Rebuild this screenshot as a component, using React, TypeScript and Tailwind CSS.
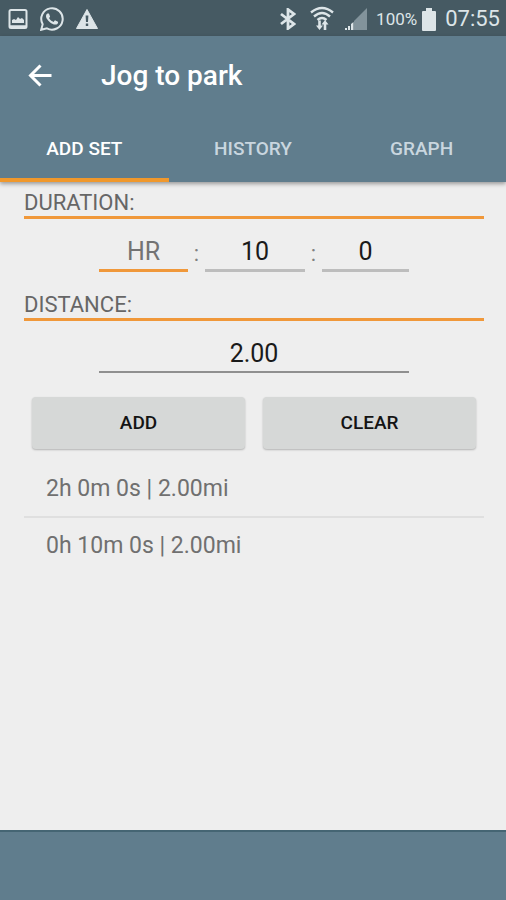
import { useState } from "react";

function StatusBar() {
  return (
    <div className="flex h-9 items-center bg-[#465a63] pt-0.5 pr-1.5 pl-2 text-[#dde5e8]">
      <div className="flex items-center gap-3">
        <svg className="h-5 w-5" viewBox="0 0 20 20" fill="none" role="img" aria-label="Screenshot saved">
          <rect x="1.5" y="1" width="17" height="18" rx="1.5" stroke="currentColor" strokeWidth="2" />
          <path d="M4 14v-3l2-1 2 1 2-3 2 2 2-1 2 2v3z" fill="currentColor" />
          <path d="M2 17.500h16" stroke="currentColor" strokeWidth="2.500" />
        </svg>
        <svg className="h-6 w-6" viewBox="0 0 24 24" fill="currentColor" role="img" aria-label="WhatsApp">
          <path d="M17.472 14.382c-.297-.149-1.758-.867-2.030-.967-.273-.099-.471-.148-.670.150-.197.297-.767.966-.940 1.164-.173.199-.347.223-.644.075-.297-.150-1.255-.463-2.390-1.475-.883-.788-1.480-1.761-1.653-2.059-.173-.297-.018-.458.130-.606.134-.133.298-.347.446-.520.149-.174.198-.298.298-.497.099-.198.050-.371-.025-.520-.075-.149-.669-1.612-.916-2.207-.242-.579-.487-.500-.669-.510-.173-.008-.371-.010-.570-.010-.198 0-.520.074-.792.372-.272.297-1.040 1.016-1.040 2.479 0 1.462 1.065 2.875 1.213 3.074.149.198 2.096 3.200 5.077 4.487.709.306 1.262.489 1.694.625.712.227 1.360.195 1.871.118.571-.085 1.758-.719 2.006-1.413.248-.694.248-1.289.173-1.413-.074-.124-.272-.198-.570-.347" />
          <path d="M1.200 22.800l1.500-5.600A10.700 10.700 0 1 1 6.900 21.300z" fill="none" stroke="currentColor" strokeWidth="2" />
        </svg>
        <svg className="h-[22px] w-[22px]" viewBox="0 0 22 22" role="img" aria-label="Warning">
          <path d="M11 1.500L21.500 20.500H.500z" fill="currentColor" stroke="currentColor" strokeLinejoin="round" />
          <path d="M9.600 7.500h2.800L12 14h-2zM9.800 15.500h2.400V18H9.800z" fill="#465a63" />
        </svg>
      </div>
      <div className="ml-auto flex items-center">
        <svg className="mr-3.5 h-[22px] w-4" viewBox="0 0 16 22" fill="none" role="img" aria-label="Bluetooth">
          <path d="M1 6l13 10-6 4.500V1.500L14 6 1 16" stroke="currentColor" strokeWidth="2.800" />
        </svg>
        <svg className="mr-2.5 h-[26px] w-6" viewBox="0 0 24 26" fill="none" role="img" aria-label="Wi-Fi">
          <g stroke="currentColor" strokeWidth="2.400">
            <path d="M1 6.500Q12-2.500 23 6.500" />
            <path d="M4 10.500Q12 3.500 20 10.500" />
            <path d="M7.500 14Q12 10 16.500 14" />
          </g>
          <path d="M9.500 14.500v7M15 17v7" stroke="currentColor" strokeWidth="2.600" />
          <path d="M6 19.500h7L9.500 24zM11.500 18.500h7L15 14z" fill="currentColor" />
        </svg>
        <svg className="mr-2 h-6 w-6" viewBox="0 0 24 24" role="img" aria-label="Signal">
          <path d="M23 1v22H10V14z" fill="#82939b" />
          <path d="M1 21h2v2H1zM4 19h2v4H4z" fill="currentColor" />
          <path d="M7 17l2.500-2V23H7z" fill="currentColor" />
        </svg>
        <span className="mr-1 text-[17px] leading-6">100%</span>
        <svg className="mr-2 h-[23px] w-4" viewBox="0 0 16 23" fill="currentColor" role="img" aria-label="Battery full">
          <path d="M5 0h6v3h3q1 0 1 1v18q0 1-1 1H2q-1 0-1-1V4q0-1 1-1h3z" />
        </svg>
        <span className="text-[22px] leading-6">07:55</span>
      </div>
    </div>
  );
}

const tabs = ["ADD SET", "HISTORY", "GRAPH"];

const fieldBase =
  "w-full min-w-0 bg-transparent text-center text-[25px] leading-[34px] text-[#1a1a1a] outline-none placeholder:text-[#737373] placeholder:opacity-100";

function SectionTitle({ children }: { children: string }) {
  return (
    <h2 className="border-b-[3px] border-[#f0983a] pt-2 text-[22px] leading-[26px] text-[#666]">
      {children}
    </h2>
  );
}

export default function App() {
  const [active, setActive] = useState("ADD SET");
  const [hours, setHours] = useState("");
  const [minutes, setMinutes] = useState("10");
  const [seconds, setSeconds] = useState("0");
  const [distance, setDistance] = useState("2.00");
  const [sets, setSets] = useState(["2h 0m 0s | 2.00mi", "0h 10m 0s | 2.00mi"]);

  const add = () =>
    setSets([...sets, `${hours || 0}h ${minutes || 0}m ${seconds || 0}s | ${distance || 0}mi`]);
  const clear = () => {
    setHours("");
    setMinutes("");
    setSeconds("");
    setDistance("");
  };

  return (
    <div className="flex min-h-screen flex-col bg-[#eee] font-[Roboto,sans-serif]">
      <StatusBar />
      <header className="bg-[#607d8d] shadow-[0_2px_4px_rgba(0,0,0,0.35)]">
        <div className="flex h-20 items-center gap-[49px] pl-7">
          <button type="button" aria-label="Back" className="text-white">
            <svg className="h-6 w-6" viewBox="0 0 24 24" fill="none" stroke="currentColor" strokeWidth="3">
              <path d="M23.500 11.500H2.500M12.500 1.500L2.500 11.500l10 10" />
            </svg>
          </button>
          <h1 className="text-[28px] leading-8 font-medium text-white">Jog to park</h1>
        </div>
        <nav className="grid grid-cols-3">
          {tabs.map((tab) => (
            <button
              key={tab}
              type="button"
              onClick={() => setActive(tab)}
              className={`h-[66px] border-b-4 pt-1 text-[19px] leading-6 font-medium ${
                active === tab ? "border-[#f0982c] text-white" : "border-transparent text-[#c9d6df]"
              }`}
            >
              {tab}
            </button>
          ))}
        </nav>
      </header>

      <main className="flex-1 pr-[22px] pl-6">
        <SectionTitle>DURATION:</SectionTitle>
        <div className="mt-4 grid grid-cols-[89fr_17px_100fr_17px_87fr] items-center px-[75px] text-center text-[22px] text-[#808080]">
          <input
            aria-label="Hours"
            placeholder="HR"
            value={hours}
            onChange={(e) => setHours(e.target.value)}
            className={`${fieldBase} border-b-[3px] border-[#f0983a]`}
          />
          <span>:</span>
          <input
            aria-label="Minutes"
            value={minutes}
            onChange={(e) => setMinutes(e.target.value)}
            className={`${fieldBase} border-b-[3px] border-[#bdbdbd]`}
          />
          <span>:</span>
          <input
            aria-label="Seconds"
            value={seconds}
            onChange={(e) => setSeconds(e.target.value)}
            className={`${fieldBase} border-b-[3px] border-[#bdbdbd]`}
          />
        </div>

        <div className="mt-3">
          <SectionTitle>DISTANCE:</SectionTitle>
        </div>
        <div className="mt-4 px-[75px]">
          <input
            aria-label="Distance"
            value={distance}
            onChange={(e) => setDistance(e.target.value)}
            className={`${fieldBase} border-b-2 border-[#8f8f8f]`}
          />
        </div>

        <div className="mt-6 grid grid-cols-2 gap-[18px] px-2 text-[19px] leading-6 font-medium text-[#141414]">
          <button
            type="button"
            onClick={add}
            className="h-[52px] rounded-[4px] bg-[#d6d8d7] shadow-[0_1px_2px_rgba(0,0,0,0.25)]"
          >
            ADD
          </button>
          <button
            type="button"
            onClick={clear}
            className="h-[52px] rounded-[4px] bg-[#d6d8d7] shadow-[0_1px_2px_rgba(0,0,0,0.25)]"
          >
            CLEAR
          </button>
        </div>

        <ul className="mt-3 divide-y-2 divide-[#dfdfdf] text-[23px] leading-[55px] text-[#707070]">
          {sets.map((set, i) => (
            <li key={i} className="px-[22px]">
              {set}
            </li>
          ))}
        </ul>
      </main>

      <footer className="h-[70px] border-t-2 border-[#456573] bg-[#607d8d]" />
    </div>
  );
}
